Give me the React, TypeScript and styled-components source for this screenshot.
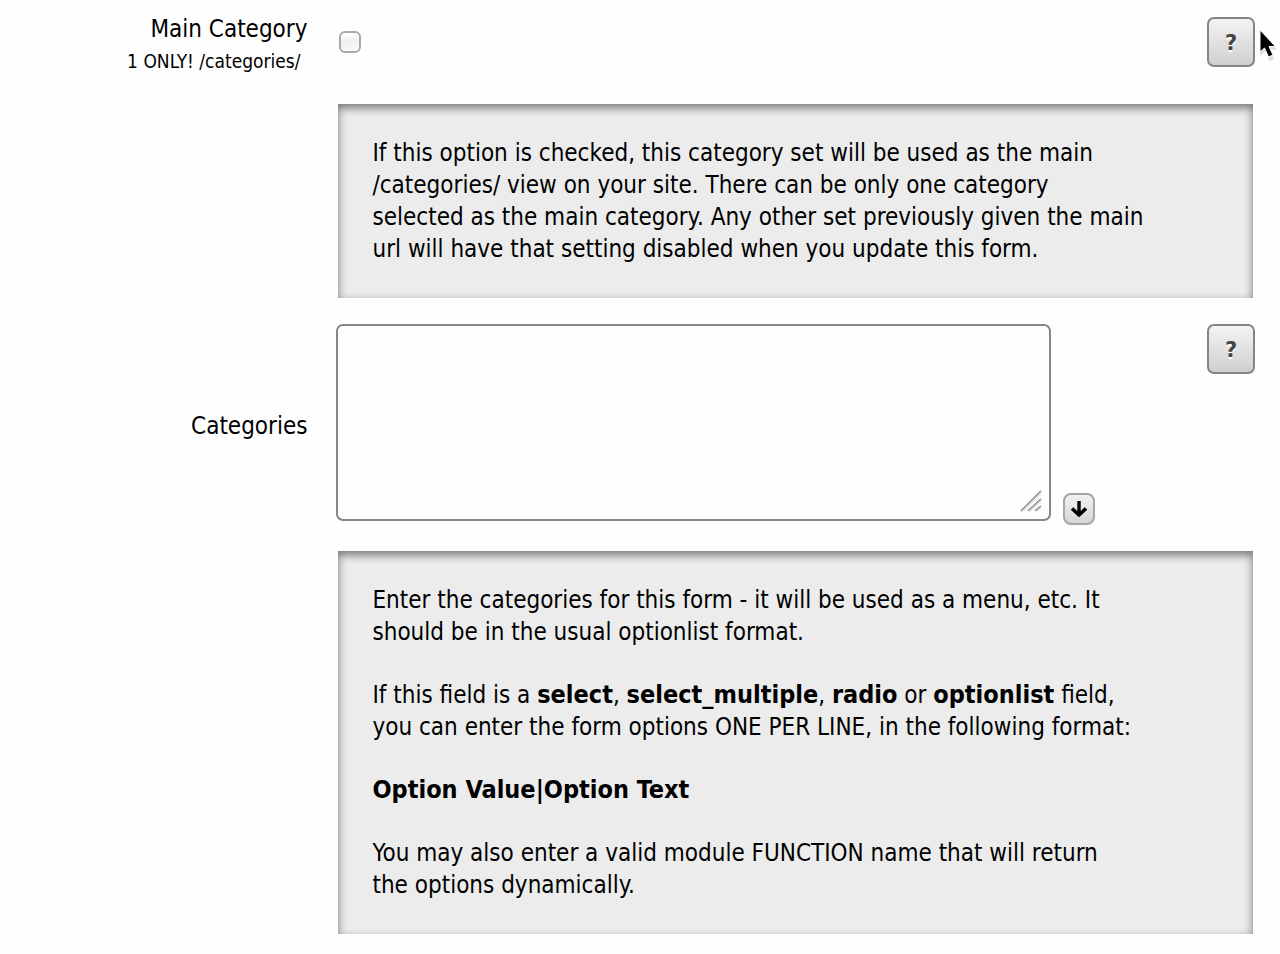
import React from "react";
import styled, { createGlobalStyle } from "styled-components";

const GlobalStyle = createGlobalStyle`
  * { box-sizing: border-box; }
  body {
    margin: 0;
    background: #fefefe;
    color: #000;
    font-family: "DejaVu Sans Condensed", "DejaVu Sans", Tahoma, sans-serif;
    font-stretch: condensed;
    font-size: 24px;
    line-height: 32px;
  }
`;

const Form = styled.form`
  position: relative;
  display: flex;
  flex-direction: column;
  gap: 26px;
  padding: 17px 25px 19px 0;
`;

const Field = styled.div`
  display: grid;
  grid-template-columns: 24.5% minmax(0, 1fr);
  column-gap: 31px;
  row-gap: 26px;
`;

const LabelCell = styled.div<{ $centered?: boolean }>`
  align-self: ${(p) => (p.$centered ? "center" : "start")};
  display: flex;
  flex-direction: column;
  align-items: flex-end;
  margin-top: ${(p) => (p.$centered ? "2px" : "-4px")};
  white-space: nowrap;
`;

const Note = styled.small`
  font-size: 19px;
  line-height: 33px;
  padding-right: 7px;
`;

const Controls = styled.div`
  display: flex;
  align-items: flex-start;
  justify-content: space-between;
`;

const CheckBox = styled.input`
  appearance: none;
  width: 22px;
  height: 22px;
  margin: 14px 1px;
  border: 2px solid #a9a9a9;
  border-radius: 6px;
  background: linear-gradient(#fff, #f0f0f0 50%, #fafafa);
  &:checked { background: #777; }
`;

const HelpButton = styled.button`
  width: 48px;
  height: 50px;
  padding: 2px 0 0;
  border: 2px solid #858585;
  border-radius: 7px;
  background: linear-gradient(#f3f3f3, #cfcfcf);
  color: #444;
  font: bold 21px/32px "DejaVu Sans", Verdana, sans-serif;
  text-shadow: 0 2px 1px #fff;
`;

const EditorGroup = styled.div`
  display: flex;
  align-items: flex-end;
  gap: 12px;
  flex: 0 1 759px;
  margin-left: -2px;
`;

const Editor = styled.div`
  position: relative;
  display: flex;
  flex: 1;
  margin-bottom: 4px;
`;

const TextArea = styled.textarea`
  width: 100%;
  height: 197px;
  padding: 8px;
  border: 2px solid #868686;
  border-radius: 7px;
  background: #fefefe;
  font: inherit;
  resize: none;
`;

const Grip = styled.svg`
  position: absolute;
  right: 9px;
  bottom: 9px;
  pointer-events: none;
`;

const ExpandButton = styled.button`
  display: grid;
  place-items: center;
  width: 32px;
  height: 32px;
  padding: 0;
  border: 2px solid #a6a6a6;
  border-radius: 8px;
  background: linear-gradient(#f1f1f1, #d6d6d6);
`;

const HelpPanel = styled.section`
  grid-column: 2;
  display: flex;
  flex-direction: column;
  gap: 31px;
  margin-right: 2px;
  padding: 33px 34px;
  background: #ececec;
  box-shadow: inset 0 4px 10px rgba(0, 0, 0, 0.5);
`;

const Text = styled.p`
  margin: 0;
`;

const Strong = styled.strong`
  font-size: 25px;
  line-height: 1;
`;

const Pointer = styled.svg`
  position: absolute;
  top: 28px;
  right: 2px;
  pointer-events: none;
`;

function MainCategoryField() {
  return (
    <Field>
      <LabelCell>
        <label htmlFor="main-category">Main Category</label>
        <Note>1 ONLY! /categories/</Note>
      </LabelCell>
      <Controls>
        <CheckBox id="main-category" type="checkbox" />
        <HelpButton type="button">?</HelpButton>
      </Controls>
      <HelpPanel>
        <Text>
          If this option is checked, this category set will be used as the main
          <br />
          /categories/ view on your site. There can be only one category
          <br />
          selected as the main category. Any other set previously given the main
          <br />
          url will have that setting disabled when you update this form.
        </Text>
      </HelpPanel>
    </Field>
  );
}

function CategoriesField() {
  return (
    <Field>
      <LabelCell $centered>
        <label htmlFor="categories">Categories</label>
      </LabelCell>
      <Controls>
        <EditorGroup>
          <Editor>
            <TextArea id="categories" />
            <Grip width="22" height="22" viewBox="0 0 22 22" fill="none" aria-hidden="true">
              <path d="M1 21L21 1M8 21L21 9M15 21L21 16" stroke="#a2a2a2" strokeWidth="2" />
              <path d="M4 21L21 4M11 21L21 12M18 21L21 19" stroke="#dedede" strokeWidth="1" />
            </Grip>
          </Editor>
          <ExpandButton type="button" aria-label="Enlarge text box">
            <svg width="18" height="18" viewBox="0 0 18 18" fill="none" aria-hidden="true">
              <path d="M9 1V15" stroke="#000" strokeWidth="3.4" />
              <path
                d="M2 8.5L9 15L16 8.5"
                stroke="#000"
                strokeWidth="3.6"
                strokeLinejoin="round"
              />
            </svg>
          </ExpandButton>
        </EditorGroup>
        <HelpButton type="button">?</HelpButton>
      </Controls>
      <HelpPanel>
        <Text>
          Enter the categories for this form - it will be used as a menu, etc. It
          <br />
          should be in the usual optionlist format.
        </Text>
        <Text>
          If this field is a <Strong>select</Strong>, <Strong>select_multiple</Strong>,{" "}
          <Strong>radio</Strong> or <Strong>optionlist</Strong> field,
          <br />
          you can enter the form options ONE PER LINE, in the following format:
        </Text>
        <Text>
          <Strong>Option Value|Option Text</Strong>
        </Text>
        <Text>
          You may also enter a valid module FUNCTION name that will return
          <br />
          the options dynamically.
        </Text>
      </HelpPanel>
    </Field>
  );
}

export default function App() {
  return (
    <>
      <GlobalStyle />
      <Form>
        <MainCategoryField />
        <CategoriesField />
        <Pointer width="20" height="36" viewBox="0 0 20 36" aria-hidden="true">
          <path
            d="M2 2V26L7.5 21L11.5 31L16 29L12 19.5H19Z"
            transform="translate(0 2)"
            fill="#bbb"
            opacity="0.5"
          />
          <path
            d="M2 2V24L6.5 20L10.5 29L15 27L11 18.5H17.5Z"
            fill="#000"
            stroke="#fff"
            strokeWidth="1"
          />
        </Pointer>
      </Form>
    </>
  );
}
